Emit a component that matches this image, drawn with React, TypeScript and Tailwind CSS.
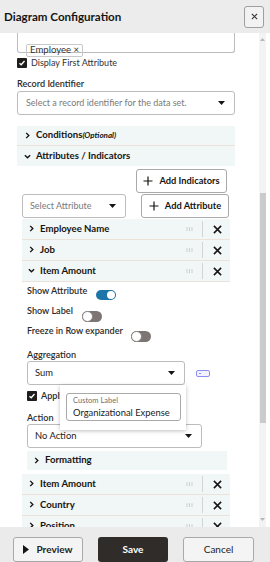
import React from "react";

const Chevron = ({ down }: { down?: boolean }) => (
  <svg width="7" height="7" viewBox="0 0 8 8" className="shrink-0">
    <path
      d={down ? "M1 2.5 L4 5.5 L7 2.5" : "M2.5 1 L5.5 4 L2.5 7"}
      fill="none"
      stroke="#161513"
      strokeWidth="1.6"
    />
  </svg>
);

const Caret = () => (
  <svg width="7" height="4" viewBox="0 0 7 4" className="shrink-0">
    <path d="M0 0 H7 L3.5 4 Z" fill="#161513" />
  </svg>
);

const XIcon = () => (
  <svg width="9" height="9" viewBox="0 0 10 10" className="shrink-0">
    <path d="M1 1 L9 9 M9 1 L1 9" stroke="#161513" strokeWidth="1.7" />
  </svg>
);

const Grip = () => (
  <svg width="7" height="4" viewBox="0 0 7 4" className="shrink-0" fill="#a0a0a0">
    <circle cx="1" cy="1" r="0.6" />
    <circle cx="3.5" cy="1" r="0.6" />
    <circle cx="6" cy="1" r="0.6" />
    <circle cx="1" cy="3" r="0.6" />
    <circle cx="3.5" cy="3" r="0.6" />
    <circle cx="6" cy="3" r="0.6" />
  </svg>
);

const Plus = () => (
  <svg width="10" height="10" viewBox="0 0 10 10" className="shrink-0">
    <path d="M5 0.5 V9.5 M0.5 5 H9.5" stroke="#161513" strokeWidth="1.2" />
  </svg>
);

const Check = () => (
  <div className="w-[10px] h-[10px] bg-[#1f1d1b] rounded-[1px] flex items-center justify-center shrink-0">
    <svg width="8" height="8" viewBox="0 0 8 8">
      <path d="M1.5 4.2 L3.2 5.8 L6.5 2" fill="none" stroke="#fff" strokeWidth="1.3" />
    </svg>
  </div>
);

const Toggle = ({ on }: { on?: boolean }) =>
  on ? (
    <div className="w-[20px] h-[10px] rounded-full bg-[#1d74a8] flex items-center justify-end pr-[1px] shrink-0">
      <div className="w-[8px] h-[8px] rounded-full bg-white" />
    </div>
  ) : (
    <div className="w-[20px] h-[11px] rounded-full bg-[#7b7573] flex items-center justify-start shrink-0">
      <div className="w-[11px] h-[11px] rounded-full bg-white border border-[#8a8482]" />
    </div>
  );

const AttrRow = ({ label, down }: { label: string; down?: boolean }) => (
  <div className="h-[21px] flex items-center bg-[#f1f6f6] border-b border-[#ebe3d9] pr-[8px]">
    <div className="flex-1 flex items-center gap-[5px] pl-[6px]">
      <Chevron down={down} />
      <span className="font-bold text-[9.6px] text-[#161513]">{label}</span>
    </div>
    <Grip />
    <div className="ml-[9px] w-px h-[16px] bg-[#d4d4d4]" />
    <div className="ml-[10px]">
      <XIcon />
    </div>
  </div>
);

const Label = ({ children }: { children: React.ReactNode }) => (
  <span className="text-[9.1px] leading-[12px] font-semibold text-[#2b2b2b] whitespace-nowrap">{children}</span>
);

export default function App() {
  return (
    <div
      className="w-[270px] h-[562px] flex flex-col bg-white overflow-hidden text-[#161513]"
      style={{ fontFamily: "Lato, 'Open Sans', sans-serif" }}
    >
      {/* Header */}
      <div className="h-[33px] shrink-0 bg-[#ececec] flex items-center justify-between pl-[4px] pr-[6px]">
        <span className="text-[11.6px] font-bold text-[#161513]">Diagram Configuration</span>
        <div className="w-[20px] h-[22px] border border-[#9f9f9f] rounded-[3px] flex items-center justify-center bg-[#f2f2f2]">
          <svg width="7" height="7" viewBox="0 0 8 8">
            <path d="M1 1 L7 7 M7 1 L1 7" stroke="#333" strokeWidth="1.2" />
          </svg>
        </div>
      </div>

      {/* Body */}
      <div className="flex-1 flex min-h-0 overflow-hidden">
        <div className="flex-1 min-w-0 overflow-hidden">
          <div className="flex flex-col pl-[17px] pr-[24px]">
            {/* tag box */}
            <div className="h-[20px] border-x border-b border-[#bcbcbc] rounded-b-[3px] pl-[8px] pt-[2px]">
              <div className="inline-flex items-center h-[13px] px-[3px] border border-[#c8c8c8] rounded-[2px] text-[9.6px] text-[#333]">
                Employee ×
              </div>
            </div>
            <div className="mt-[5px] h-[10px] flex items-center gap-[4px]">
              <Check />
              <span className="text-[9px] text-[#333]">Display First Attribute</span>
            </div>
            <div className="mt-[10px] h-[12px] flex">
              <Label>Record Identifier</Label>
            </div>
            <div className="mt-[1px] h-[24px] border border-[#bcbcbc] rounded-[3px] flex items-center justify-between pl-[8px] pr-[9px]">
              <span className="text-[9px] text-[#7a7a7a]">Select a record identifier for the data set.</span>
              <Caret />
            </div>

            {/* Conditions / Attributes */}
            <div className="mt-[11px] h-[20px] flex items-center gap-[5px] pl-[7px] bg-[#f1f6f6] border-b border-[#ebe3d9]">
              <Chevron />
              <span className="text-[9.6px] font-bold">
                Conditions<span className="italic text-[8px]">(Optional)</span>
              </span>
            </div>
            <div className="h-[20px] flex items-center gap-[5px] pl-[7px] bg-[#f1f6f6]">
              <Chevron down />
              <span className="text-[9.6px] font-bold">Attributes / Indicators</span>
            </div>

            <div className="mt-[3px] self-end mr-[8px] w-[91px] h-[24px] border border-[#a9a9a9] rounded-[3px] flex items-center justify-center gap-[6px] bg-white">
              <Plus />
              <span className="text-[9.3px] font-bold">Add Indicators</span>
            </div>
            <div className="mt-[1px] flex pl-[5px]">
              <div className="w-[104px] h-[24px] border border-[#bcbcbc] rounded-[3px] flex items-center justify-between pl-[7px] pr-[9px]">
                <span className="text-[9px] text-[#7a7a7a]">Select Attribute</span>
                <Caret />
              </div>
              <div className="ml-[15px] w-[88px] h-[24px] border border-[#a9a9a9] rounded-[3px] flex items-center justify-center gap-[6px]">
                <Plus />
                <span className="text-[9.3px] font-bold">Add Attribute</span>
              </div>
            </div>

            <div className="mt-[1px] mx-[5px] flex flex-col">
              <AttrRow label="Employee Name" />
              <AttrRow label="Job" />
              <AttrRow label="Item Amount" down />

              {/* expanded */}
              <div className="pl-[5px] flex flex-col">
                <div className="mt-[3px] h-[20px] flex items-start">
                  <Label>Show Attribute</Label>
                  <div className="ml-[9px] mt-[5px]">
                    <Toggle on />
                  </div>
                </div>
                <div className="h-[20px] flex items-start">
                  <Label>Show Label</Label>
                  <div className="ml-[9px] mt-[6px]">
                    <Toggle />
                  </div>
                </div>
                <div className="h-[20px] flex items-start">
                  <Label>Freeze in Row expander</Label>
                  <div className="ml-[8px] mt-[6px]">
                    <Toggle />
                  </div>
                </div>
                <div className="mt-[4px] h-[12px] flex">
                  <Label>Aggregation</Label>
                </div>
                <div className="relative flex items-center">
                  <div className="w-[158px] h-[24px] border border-[#bcbcbc] rounded-[3px] flex items-center justify-between pl-[7px] pr-[9px]">
                    <span className="text-[9.4px] text-[#222]">Sum</span>
                    <Caret />
                  </div>
                  <div className="ml-[11px] w-[14px] h-[7px] border border-[#8d8cf2] rounded-[2px] bg-[#f3f3ff] flex items-center pl-[2px]">
                    <div className="w-[2px] h-[1px] bg-[#8d8cf2]" />
                  </div>
                  {/* popup */}
                  <div className="absolute left-[33px] top-[24px] w-[126px] h-[45px] bg-white shadow-[0_1px_4px_rgba(0,0,0,0.25)] z-10 pl-[6px] pt-[8px]">
                    <div className="w-[115px] h-[28px] border border-[#a9a9a9] rounded-[3px] px-[6px] pt-[2px] flex flex-col">
                      <span className="text-[7.5px] leading-[10px] text-[#6f6f6f] whitespace-nowrap">Custom Label</span>
                      <span className="text-[9.4px] leading-[13px] text-[#222] whitespace-nowrap">Organizational Expense</span>
                    </div>
                  </div>
                </div>
                <div className="mt-[6px] h-[10px] flex items-center gap-[4px]">
                  <Check />
                  <Label>Apply Custom Label</Label>
                </div>
                <div className="mt-[11px] h-[12px] flex">
                  <Label>Action</Label>
                </div>
                <div className="w-[175px] h-[24px] border border-[#bcbcbc] rounded-[3px] flex items-center justify-between pl-[7px] pr-[9px]">
                  <span className="text-[9.4px] text-[#222]">No Action</span>
                  <Caret />
                </div>
                <div className="mt-[3px] mr-[3px] h-[19px] flex items-center gap-[5px] pl-[6px] bg-[#f1f6f6]">
                  <Chevron />
                  <span className="text-[9.6px] font-bold">Formatting</span>
                </div>
              </div>

              <div className="mt-[4px]" />
              <AttrRow label="Item Amount" />
              <AttrRow label="Country" />
              <AttrRow label="Position" />
            </div>
          </div>
        </div>

        {/* scrollbar */}
        <div className="w-[7px] mr-[4px] bg-[#f3f3f3] flex flex-col items-center">
          <svg width="5" height="3" viewBox="0 0 5 3" className="mt-[5px]">
            <path d="M0 3 L2.5 0 L5 3 Z" fill="#b8b8b8" />
          </svg>
          <div className="mt-[152px] w-[6px] h-[230px] bg-[#cbcbcb]" />
          <div className="flex-1" />
          <svg width="5" height="3" viewBox="0 0 5 3" className="mb-[6px]">
            <path d="M0 0 L5 0 L2.5 3 Z" fill="#b8b8b8" />
          </svg>
        </div>
      </div>

      {/* Footer */}
      <div className="h-[35px] shrink-0 bg-[#ebebeb] flex items-start pt-[10px] pl-[13px] gap-[15px]">
        <div className="w-[70px] h-[25px] border border-[#a9a9a9] rounded-[3px] bg-[#f4f4f4] flex items-center justify-center gap-[7px]">
          <svg width="6" height="9" viewBox="0 0 6 9">
            <path d="M0 0 L6 4.5 L0 9 Z" fill="#161513" />
          </svg>
          <span className="text-[10px] font-bold text-[#222]">Preview</span>
        </div>
        <div className="w-[70px] h-[25px] rounded-[3px] bg-[#302c29] flex items-center justify-center">
          <span className="text-[10px] font-bold text-white">Save</span>
        </div>
        <div className="w-[71px] h-[25px] border border-[#a9a9a9] rounded-[3px] bg-[#f4f4f4] flex items-center justify-center">
          <span className="text-[10px] text-[#222]">Cancel</span>
        </div>
      </div>
    </div>
  );
}
